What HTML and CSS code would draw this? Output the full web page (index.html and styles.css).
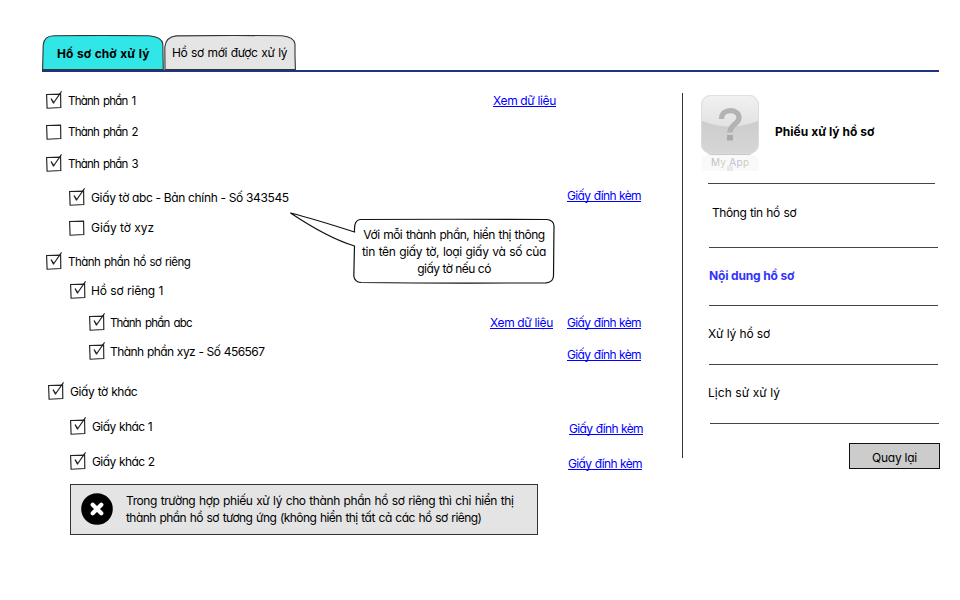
FILE: index.html
```
<!DOCTYPE html>
<html lang="vi">
<head>
<meta charset="utf-8">
<title>Hồ sơ chờ xử lý</title>
<link rel="stylesheet" href="styles.css">
</head>
<body>
<svg class="defs" width="0" height="0">
  <symbol id="box" viewBox="0 0 16 18"><path d="M.6 3.5L14.6 3.1L14.8 16.5L1.1 17.2Z"/></symbol>
  <symbol id="checked" viewBox="0 0 16 18"><path d="M.6 3.5L14.6 3.1L14.8 16.5L1.1 17.2ZM5 7.5L7.8 11.6L15.6.4M5 7.5L7.3 12L8.2 11.4"/></symbol>
</svg>
<div class="page">
  <nav class="tabs">
    <div class="tab active"><svg viewBox="0 0 122 35"><path d="M.6 34.5L1.2 10Q2 1 12 .8Q60 .2 107 .8Q120 2 120.8 9L121.3 34.5Z"/></svg><span class="k-tab1">Hồ sơ chờ xử lý</span></div>
    <div class="tab second"><svg viewBox="0 0 132 35"><path d="M1 34.5L.8 12Q2 2 12 .9Q65 .2 118 .8Q130 2 131 9L131 20L131.400 34.5Z"/></svg><span class="k-tab2">Hồ sơ mới được xử lý</span></div>
  </nav>
  <div class="content">
    <main class="list">
      <div class="row l0"><svg class="check"><use href="#checked"/></svg><span class="name k-tp">Thành phần 1</span><a class="view first">Xem dữ liệu</a></div>
      <div class="row l0 g11"><svg class="check"><use href="#box"/></svg><span class="name k-tp">Thành phần 2</span></div>
      <div class="row l0 g12"><svg class="check"><use href="#checked"/></svg><span class="name k-tp">Thành phần 3</span></div>
      <div class="row l1 g14"><svg class="check"><use href="#checked"/></svg><span class="name k-abc">Giấy tờ abc - Bản chính - Số 343545</span><a class="attach up">Giấy đính kèm</a></div>
      <div class="row l1 g10"><svg class="check"><use href="#box"/></svg><span class="name k-xyz">Giấy tờ xyz</span></div>
      <div class="row l0 g14"><svg class="check"><use href="#checked"/></svg><span class="name k-own">Thành phần hồ sơ riêng</span></div>
      <div class="row l1b g9"><svg class="check"><use href="#checked"/></svg><span class="name k-rec">Hồ sơ riêng 1</span></div>
      <div class="row l2 g12"><svg class="check"><use href="#checked"/></svg><span class="name k-pabc">Thành phần abc</span><a class="view">Xem dữ liệu</a><a class="attach">Giấy đính kèm</a></div>
      <div class="row l2 g9"><svg class="check"><use href="#checked"/></svg><span class="name k-pxyz">Thành phần xyz - Số 456567</span><a class="attach down">Giấy đính kèm</a></div>
      <div class="row l0b g20"><svg class="check"><use href="#checked"/></svg><span class="name k-other">Giấy tờ khác</span></div>
      <div class="row l1c g15"><svg class="check"><use href="#checked"/></svg><span class="name k-paper">Giấy khác 1</span><a class="attach low">Giấy đính kèm</a></div>
      <div class="row l1c g15"><svg class="check"><use href="#checked"/></svg><span class="name k-paper">Giấy khác 2</span><a class="attach low2">Giấy đính kèm</a></div>
      <div class="note">
        <svg width="32" height="32" viewBox="0 0 32 32"><circle cx="16" cy="16" r="15.8"/><path d="M11.7 11.7L20.3 20.3M20.3 11.7L11.7 20.3" stroke="#fff" stroke-width="4.2" stroke-linecap="round"/></svg>
        <p><span class="k-note1">Trong trường hợp phiếu xử lý cho thành phần hồ sơ riêng thì chỉ hiển thị</span><br><span class="k-note2">thành phần hồ sơ tương ứng (không hiển thị tất cả các hồ sơ riêng)</span></p>
      </div>
    </main>
    <aside class="side">
      <div class="divider"></div>
      <div class="panel">
        <header class="app">
          <svg width="60" height="78" viewBox="0 0 60 78">
            <defs>
              <linearGradient id="top" x2="0" y2="1"><stop stop-color="#f1f1f1"/><stop offset="1" stop-color="#e2e2e2"/></linearGradient>
              <linearGradient id="low" x2="0" y2="1"><stop stop-color="#c6c6c6"/><stop offset="1" stop-color="#d6d6d6"/></linearGradient>
              <linearGradient id="letters"><stop stop-color="#bcb4d4"/><stop offset=".3" stop-color="#c8d8b8"/><stop offset=".5" stop-color="#e0b8b8"/><stop offset=".65" stop-color="#b4bce0"/><stop offset="1" stop-color="#e0d0b0"/></linearGradient>
              <clipPath id="tile"><rect x="1" y="0" width="58" height="59" rx="10"/></clipPath>
            </defs>
            <path d="M1 67Q1 61 9 60H51Q59 61 59 67V76H1Z" fill="#f9f9f9"/>
            <rect x="8" y="54" width="44" height="6" rx="3" fill="#c8c8c8"/>
            <g clip-path="url(#tile)"><rect width="60" height="60" fill="url(#low)"/><path d="M0 0H60V25Q30 38 0 25Z" fill="url(#top)"/></g>
            <rect x="1.5" y=".5" width="57" height="58" rx="9.5" fill="none" stroke="#dcdcdc" stroke-width=".8"/>
            <path d="M21.500 24C21.500 12.500 39 13.500 39 22.500C39 29.500 30 29 30 37.500" fill="none" stroke="#b3b3b3" stroke-width="5.300"/><rect x="27" y="40" width="6" height="5.500" fill="#a9a9a9"/>
            <rect x="27" y="71" width="6" height="5" fill="#e8e8e8"/>
            <text x="11" y="71" textLength="38" fill="url(#letters)">My App</text>
          </svg>
          <strong class="k-form">Phiếu xử lý hồ sơ</strong>
        </header>
        <div class="item info"><span class="k-info">Thông tin hồ sơ</span></div>
        <div class="item current"><strong class="k-body">Nội dung hồ sơ</strong></div>
        <div class="item process"><span class="k-proc">Xử lý hồ sơ</span></div>
        <div class="item history"><span class="k-hist">Lịch sử xử lý</span></div>
        <div class="end"></div>
        <button class="k-back">Quay lại</button>
      </div>
    </aside>
  </div>
</div>
<div class="callout">
  <svg width="268" height="76" viewBox="0 0 268 76"><path d="M65.500 18.500Q65 8.500 71 7.500Q160 7 258 7.500Q265 8.500 265 14L264.500 64Q264 70.500 257 70.800Q160 71.500 72 70.500Q65.500 70 64.800 64L65.500 34Q39 26 1.500 1Q25 7 65.500 20Z"/></svg>
  <p><span class="k-tip1">Với mỗi thành phần, hiển thị thông</span><br><span class="k-tip2">tin tên giấy tờ, loại giấy và số của</span><br><span class="k-tip3">giấy tờ nếu có</span></p>
</div>
</body>
</html>
```
FILE: styles.css
```
* { box-sizing: border-box; }
body {
  margin: 0;
  background: #fff;
  color: #000;
  font: 12px/17px Inter, "Noto Sans", sans-serif;
  font-feature-settings: "cv11";
  white-space: nowrap;
}
p { margin: 0; }
.defs { display: block; height: 0; }
.page { width: 960px; height: 600px; padding: 35px 21px 0 42px; }

.tabs { display: flex; height: 37px; border-bottom: 2px solid #1d3480; width: 897px; }
.tab { display: grid; height: 35px; width: 122px; }
.tab.second { width: 132px; }
.tab > * { grid-area: 1 / 1; }
.tab svg { width: 100%; height: 35px; fill: #e5e5e5; stroke: #333; stroke-width: 1.1; }
.tab.active svg { fill: #30e6e6; }
.tab span { padding: 9px 0 0 8px; }
.tab.active span { padding: 10px 0 0 15px; font-weight: 700; }

.content { display: flex; }
.list { width: 640px; padding-top: 19px; }
.row { display: flex; height: 20px; line-height: 20px; padding-right: 41px; }
.l0 { padding-left: 4px; }
.l0b { padding-left: 6px; }
.l1 { padding-left: 27px; }
.l1b { padding-left: 28px; }
.l1c { padding-left: 28px; }
.l2 { padding-left: 47px; }
.g9 { margin-top: 9px; }
.g10 { margin-top: 10px; }
.g11 { margin-top: 11px; }
.g12 { margin-top: 12px; }
.g14 { margin-top: 14px; }
.g15 { margin-top: 15px; }
.g20 { margin-top: 20px; }
.check { width: 16px; height: 18px; margin-right: 6px; fill: none; stroke: #222; stroke-width: 1.15; }
.l1b .check, .l2 .check { margin-right: 5px; }
.name { flex: 1; }

a { color: #00f; height: 15px; line-height: 18px; margin-top: 1px; border-bottom: 1px solid #00f; }
.view { width: 63px; letter-spacing: -.35px; margin-right: 14px; }
.view.first { margin-right: 85px; }
.attach { width: 74px; letter-spacing: -.65px; word-spacing: .5px; }
.up { margin-top: -1px; }
.down { margin-top: 4px; }
.low { margin: 3px -2px 0 0; }
.low2 { margin: 3px -1px 0 0; }

.note { display: flex; gap: 13px; margin: 12px 0 0 28px; padding: 8px 0 0 10px; width: 468px; height: 51px; background: #e4e4e4; border: 1px solid #333; }
.note p { margin-top: -1px; }

.side { display: flex; width: 257px; padding-top: 21px; }
.divider { width: 1px; height: 365px; background: #333; }
.panel { display: flex; flex-direction: column; width: 257px; padding-left: 17px; }
.app { display: flex; height: 90px; padding-top: 2px; gap: 15px; line-height: 73px; }
.app svg text { font: 400 10px Inter, sans-serif; }
.item { border-top: 1px solid #444; margin-left: 9px; width: 229px; height: 58px; padding-top: 19px; }
.info { margin-left: 8px; height: 64px; padding: 20px 0 0 4px; width: 227px; }
.current { box-shadow: -1px -1px 0 -1px #444; }
.current strong { color: #33f; }
.process, .history { height: 59px; }
.process span, .history span { margin-left: -1px; }
.end { width: 229px; height: 1px; margin-left: 10px; background: #444; }
button { align-self: flex-end; width: 91px; height: 26px; margin: 19px -1px 0 0; padding: 3px 0 0; border: 1px solid #111; background: #ccc; color: #000; font: inherit; font-feature-settings: inherit; }

.callout { position: absolute; left: 289px; top: 212px; width: 268px; height: 76px; }
.callout svg { display: block; fill: #fff; stroke: #111; stroke-width: 1.2; }
.callout p { position: absolute; left: 65px; top: 14px; width: 200px; text-align: center; }

.k-tab1 { letter-spacing: .04px; word-spacing: .7px; }
.k-tab2 { letter-spacing: -.4px; word-spacing: .8px; }
.k-tp { font-size: 11.5px; letter-spacing: -.76px; word-spacing: 1.4px; }
.k-abc { letter-spacing: -.34px; }
.k-xyz { letter-spacing: -.06px; }
.k-own { font-size: 11.5px; letter-spacing: -.53px; word-spacing: 1px; }
.k-rec { letter-spacing: -.2px; word-spacing: .4px; }
.k-pabc { font-size: 11.5px; letter-spacing: -.82px; word-spacing: 1.8px; }
.k-pxyz { letter-spacing: -.54px; word-spacing: .4px; }
.k-other { letter-spacing: -.45px; word-spacing: .5px; }
.k-paper { letter-spacing: -.6px; word-spacing: .6px; }
.k-note1 { letter-spacing: -.42px; word-spacing: .8px; }
.k-note2 { letter-spacing: -.57px; word-spacing: .9px; }
.k-form { letter-spacing: .03px; }
.k-info { letter-spacing: -.42px; word-spacing: .7px; }
.k-body { letter-spacing: -.15px; }
.k-proc { letter-spacing: -.1px; }
.k-hist { letter-spacing: .07px; }
.k-back { letter-spacing: -.23px; }
.k-tip1 { letter-spacing: -.52px; word-spacing: .8px; }
.k-tip2 { letter-spacing: -.38px; word-spacing: .8px; }
.k-tip3 { letter-spacing: -.5px; }
```
